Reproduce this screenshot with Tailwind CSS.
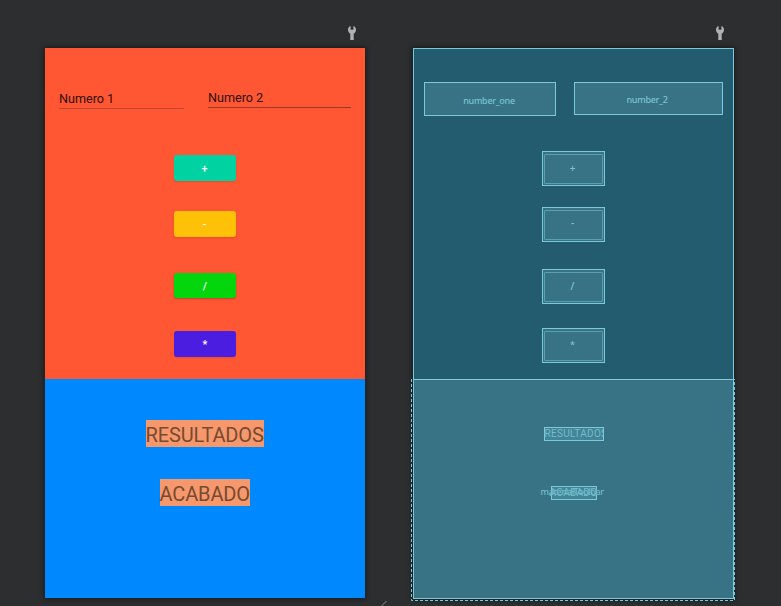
<!DOCTYPE html>
<html lang="es">
<head>
<meta charset="utf-8">
<title>Layout editor</title>
<script src="https://cdn.jsdelivr.net/npm/@tailwindcss/browser@4"></script>
</head>
<body class="bg-[#2d2e30] w-[781px] h-[606px] overflow-hidden relative flex items-start pl-[45px] gap-12 font-['Roboto',sans-serif]">
<!-- Design surface -->
<section class="w-80">
  <header class="h-12 flex justify-end items-start pt-[26px] pr-[9px]">
    <svg class="w-2 h-3.5" viewBox="0 0 8 14" fill="#afb1b3"><path d="M2.6 0C1 .6 0 2 0 3.8 0 5.6.9 7 2.3 7.7V14h3.4V7.7C7.1 7 8 5.6 8 3.8 8 2 7 .6 5.4 0V3.8H2.6Z"/></svg>
  </header>
  <div class="shadow-[0_0_5px_1px_rgba(0,0,0,0.45)]">
    <div class="h-[331px] bg-[#ff5733] text-[12.6px] text-[#2d100b]">
      <div class="flex items-start pl-3.5 gap-6 pt-10 h-[107px]">
        <div class="w-[125px] h-[21px] border-b border-[#ba4832] leading-[21px]">Numero 1</div>
        <div class="w-[143px] h-5 border-b border-[#9c3824] leading-5">Numero 2</div>
      </div>
      <div class="flex flex-col items-center text-white text-[11px] font-medium text-center leading-[27px]">
        <div class="w-[62px] h-[26px] rounded-[3px] bg-[#00d2a1] pr-px shadow-[0_1px_2px_rgba(0,0,0,0.12)]">+</div>
        <div class="mt-[30px] w-[62px] h-[26px] rounded-[3px] bg-[#ffc107] pr-px shadow-[0_1px_2px_rgba(0,0,0,0.12)] leading-[28px]">-</div>
        <div class="mt-[35.5px] w-[62px] h-[25.5px] rounded-[3px] bg-[#03d60d] shadow-[0_1px_2px_rgba(0,0,0,0.25)]">/</div>
        <div class="mt-[33px] w-[62px] h-[26px] rounded-[3px] bg-[#4b1de0] shadow-[0_1px_2px_rgba(0,0,0,0.12)] leading-[28px]">*</div>
      </div>
    </div>
    <div class="h-[219px] bg-[#0088ff] pt-[41px] flex flex-col items-center text-[20px] tracking-[-0.14px] leading-[30px] text-[#774a32]">
      <div class="w-[118px] h-[27px] bg-[#f6986b] whitespace-nowrap"><span class="-ml-[0.5px]">RESULTADOS</span></div>
      <div class="mt-8 w-[90px] h-[27px] bg-[#f6986b] whitespace-nowrap"><span class="-ml-[0.5px]">ACABADO</span></div>
    </div>
  </div>
</section>
<!-- Blueprint surface -->
<section class="w-[321px] font-['Noto_Sans',sans-serif] text-[9px] text-[#73bccd]">
  <header class="h-12 flex justify-end items-start pt-[26px] pr-[10px]">
    <svg class="w-2 h-3.5" viewBox="0 0 8 14" fill="#afb1b3"><path d="M2.6 0C1 .6 0 2 0 3.8 0 5.6.9 7 2.3 7.7V14h3.4V7.7C7.1 7 8 5.6 8 3.8 8 2 7 .6 5.4 0V3.8H2.6Z"/></svg>
  </header>
  <div class="relative shadow-[0_0_5px_1px_rgba(0,0,0,0.45)]">
    <div class="h-[331px] bg-[#235c6e] border border-b-0 border-[#7ac9dc]">
      <div class="flex items-start pl-2.5 gap-[18px] pt-[33px] h-[102px] text-center tracking-[-0.3px] font-medium text-[#78c3d4]">
        <div class="w-[132px] h-[34px] bg-[#387385] border border-[#7ac9dc] leading-[35px] pr-0.5">number_one</div>
        <div class="w-[149px] h-[33px] bg-[#387385] border border-[#7ac9dc] leading-[34px] pr-[3px]">number_2</div>
      </div>
      <div class="flex flex-col items-center text-center text-[10px] leading-[27px] font-medium text-[#78c3d4]">
        <div class="w-[63px] h-[35px] p-px pt-0.5 bg-[#387385] border border-[#7ac9dc]"><div class="h-[30px] border border-[#5a9fb1] pr-0.5 rounded-[1px]">+</div></div>
        <div class="mt-[21px] w-[63px] h-[35px] p-px pt-0.5 bg-[#387385] border border-[#7ac9dc]"><div class="h-[30px] border border-[#5a9fb1] pr-0.5 rounded-[1px] leading-[25px]">-</div></div>
        <div class="mt-[27px] w-[63px] h-[35px] p-px pt-0.5 bg-[#387385] border border-[#7ac9dc]"><div class="h-[30px] border border-[#5a9fb1] pr-0.5 rounded-[1px]">/</div></div>
        <div class="mt-6 w-[63px] h-[35px] p-px pt-0.5 bg-[#387385] border border-[#7ac9dc]"><div class="h-[30px] border border-[#5a9fb1] pr-0.5 rounded-[1px] text-[9px] leading-[25px]">*</div></div>
      </div>
    </div>
    <div class="h-[220px] bg-[#387385] border border-[#7ac9dc] pt-[47px] flex flex-col items-center font-['Roboto',sans-serif] text-[10px] tracking-[0.3px] leading-[12px]">
      <div class="w-[60px] h-3.5 border border-[#7ac9dc] bg-[#438497] overflow-hidden whitespace-nowrap">RESULTADOS</div>
      <div class="relative mt-[45px] w-[46px] h-3.5 border border-[#7ac9dc] bg-[#438497] whitespace-nowrap flex justify-center">ACABADO
        <span class="absolute -left-[11px] -top-[1px] text-[9px] tracking-[-0.35px] font-medium font-['Noto_Sans',sans-serif]">materialToolbar</span>
      </div>
    </div>
    <!-- Dashed selection bounds of the toolbar -->
    <svg class="absolute -left-[2px] top-[331px] w-[324px] h-[223px]" fill="none"><path d="M.5 0V221.5H323.5V0" stroke="#1d2c31"/><path d="M.5 0V221.5H323.5V0" stroke="#7ac9dc" stroke-dasharray="3 2"/></svg>
  </div>
</section>
<!-- Resize grip -->
<svg class="absolute left-[381px] top-[601px] w-[6px] h-[5px]" stroke="#87898b"><path d="M0 5.5 5.5 0"/></svg>
</body>
</html>
